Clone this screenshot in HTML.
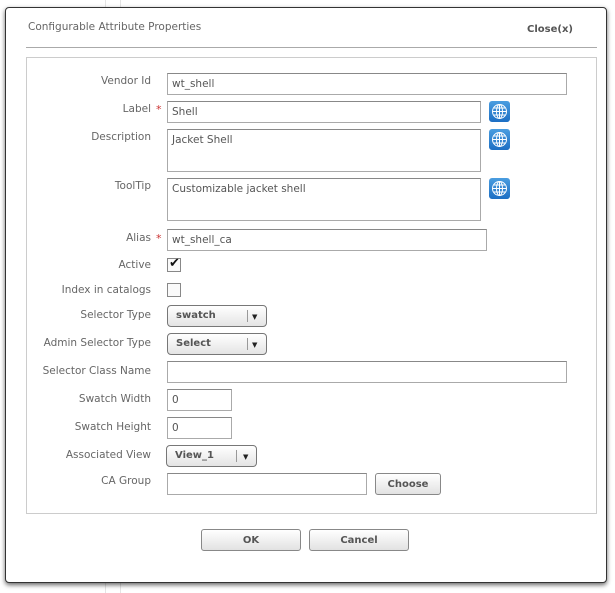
<!DOCTYPE html>
<html><head><style>
body{margin:0;width:615px;height:593px;background:#fff;position:relative;overflow:hidden;font-family:"DejaVu Sans","Liberation Sans",sans-serif;font-size:10.5px;color:#666}
.bg1{position:absolute;left:105px;top:0;width:1px;height:593px;background:#e4e4e4}
.bg2{position:absolute;left:120px;top:0;width:1px;height:593px;background:#e4e4e4}
.dlg{position:absolute;left:5px;top:7px;width:600px;height:574px;border:1px solid #333;border-radius:4px;background:#fff;box-shadow:0 2px 5px rgba(0,0,0,.6)}
.a{position:absolute}
.title{left:28px;top:21px;font-size:10.5px;color:#666}
.close{left:527px;top:24px;font-weight:bold;font-size:10px;color:#555}
.sep{left:26px;top:47px;width:571px;height:1px;background:#aaa}
.box{left:26px;top:57px;width:569px;height:455px;border:1px solid #ccc}
.lbl{position:absolute;right:464px;text-align:right;white-space:nowrap}
.in{position:absolute;border:1px solid #aaa;border-top-color:#888;background:#fff;box-sizing:border-box;padding:4px 4px 2px;color:#555}
.star{position:absolute;left:156px;color:#c33;font-size:11px}
.globe{position:absolute;left:489px;width:21px;height:21px;border-radius:3px;background:linear-gradient(#4a9de0,#1d6fc4)}
.globe svg{position:absolute;left:2px;top:2px}
.cb{position:absolute;left:167px;width:14px;height:14px;border:1px solid #888;box-sizing:border-box;background:#fafafa}
.sel{position:absolute;border:1px solid #777;border-radius:4px;background:linear-gradient(#fff,#e4e4e4);box-sizing:border-box;font-weight:bold;color:#555;font-size:10px;padding:4px 8px 2px}
.sel i{position:absolute;top:4px;bottom:4px;width:1px;background:#999}
.sel b{position:absolute;top:7px;font-size:7px;color:#222}
.btn{position:absolute;border:1px solid #888;border-radius:3px;background:linear-gradient(#fff,#e2e2e2);box-sizing:border-box;text-align:center;font-weight:bold;color:#555;font-size:10px;line-height:21px}
</style></head><body>
<div class="bg1"></div><div class="bg2"></div>
<div class="dlg"></div>
<div class="a title">Configurable Attribute Properties</div>
<div class="a close">Close(x)</div>
<div class="a sep"></div>
<div class="a box"></div>

<div class="lbl" style="top:75px">Vendor Id</div>
<div class="in" style="left:167px;top:73px;width:400px;height:22px">wt_shell</div>

<div class="lbl" style="top:103px">Label</div><div class="star" style="top:103px">*</div>
<div class="in" style="left:167px;top:101px;width:314px;height:22px">Shell</div>
<div class="globe" style="top:101px"><svg width="17" height="17" viewBox="0 0 17 17" fill="none" stroke="#fff" stroke-width="1"><circle cx="8.5" cy="8.5" r="7"/><ellipse cx="8.5" cy="8.5" rx="3" ry="7"/><line x1="8.5" y1="1.5" x2="8.5" y2="15.5"/><line x1="1.5" y1="8.5" x2="15.5" y2="8.5"/><line x1="3" y1="5" x2="14" y2="5"/><line x1="3" y1="12" x2="14" y2="12"/></svg></div>

<div class="lbl" style="top:131px">Description</div>
<div class="in" style="left:167px;top:129px;width:314px;height:43px">Jacket Shell</div>
<div class="globe" style="top:129px"><svg width="17" height="17" viewBox="0 0 17 17" fill="none" stroke="#fff" stroke-width="1"><circle cx="8.5" cy="8.5" r="7"/><ellipse cx="8.5" cy="8.5" rx="3" ry="7"/><line x1="8.5" y1="1.5" x2="8.5" y2="15.5"/><line x1="1.5" y1="8.5" x2="15.5" y2="8.5"/><line x1="3" y1="5" x2="14" y2="5"/><line x1="3" y1="12" x2="14" y2="12"/></svg></div>

<div class="lbl" style="top:180px">ToolTip</div>
<div class="in" style="left:167px;top:178px;width:314px;height:43px">Customizable jacket shell</div>
<div class="globe" style="top:178px"><svg width="17" height="17" viewBox="0 0 17 17" fill="none" stroke="#fff" stroke-width="1"><circle cx="8.5" cy="8.5" r="7"/><ellipse cx="8.5" cy="8.5" rx="3" ry="7"/><line x1="8.5" y1="1.5" x2="8.5" y2="15.5"/><line x1="1.5" y1="8.5" x2="15.5" y2="8.5"/><line x1="3" y1="5" x2="14" y2="5"/><line x1="3" y1="12" x2="14" y2="12"/></svg></div>

<div class="lbl" style="top:232px">Alias</div><div class="star" style="top:232px">*</div>
<div class="in" style="left:167px;top:229px;width:320px;height:22px">wt_shell_ca</div>

<div class="lbl" style="top:259px">Active</div>
<div class="cb" style="top:258px"><span style="position:absolute;left:1px;top:-3px;font-size:13px;color:#111">✔</span></div>
<div class="lbl" style="top:284px">Index in catalogs</div>
<div class="cb" style="top:283px"></div>

<div class="lbl" style="top:309px">Selector Type</div>
<div class="sel" style="left:167px;top:305px;width:100px;height:22px">swatch<i style="left:79px"></i><b style="left:84px">▼</b></div>
<div class="lbl" style="top:337px">Admin Selector Type</div>
<div class="sel" style="left:167px;top:333px;width:100px;height:22px">Select<i style="left:79px"></i><b style="left:84px">▼</b></div>

<div class="lbl" style="top:365px">Selector Class Name</div>
<div class="in" style="left:167px;top:361px;width:400px;height:22px"></div>
<div class="lbl" style="top:393px">Swatch Width</div>
<div class="in" style="left:167px;top:389px;width:65px;height:22px">0</div>
<div class="lbl" style="top:421px">Swatch Height</div>
<div class="in" style="left:167px;top:417px;width:65px;height:22px">0</div>

<div class="lbl" style="top:449px">Associated View</div>
<div class="sel" style="left:166px;top:445px;width:91px;height:22px">View_1<i style="left:69px"></i><b style="left:76px">▼</b></div>
<div class="lbl" style="top:475px">CA Group</div>
<div class="in" style="left:167px;top:473px;width:200px;height:22px"></div>
<div class="btn" style="left:375px;top:473px;width:66px;height:22px">Choose</div>

<div class="btn" style="left:201px;top:529px;width:100px;height:22px">OK</div>
<div class="btn" style="left:309px;top:529px;width:100px;height:22px">Cancel</div>
</body></html>
